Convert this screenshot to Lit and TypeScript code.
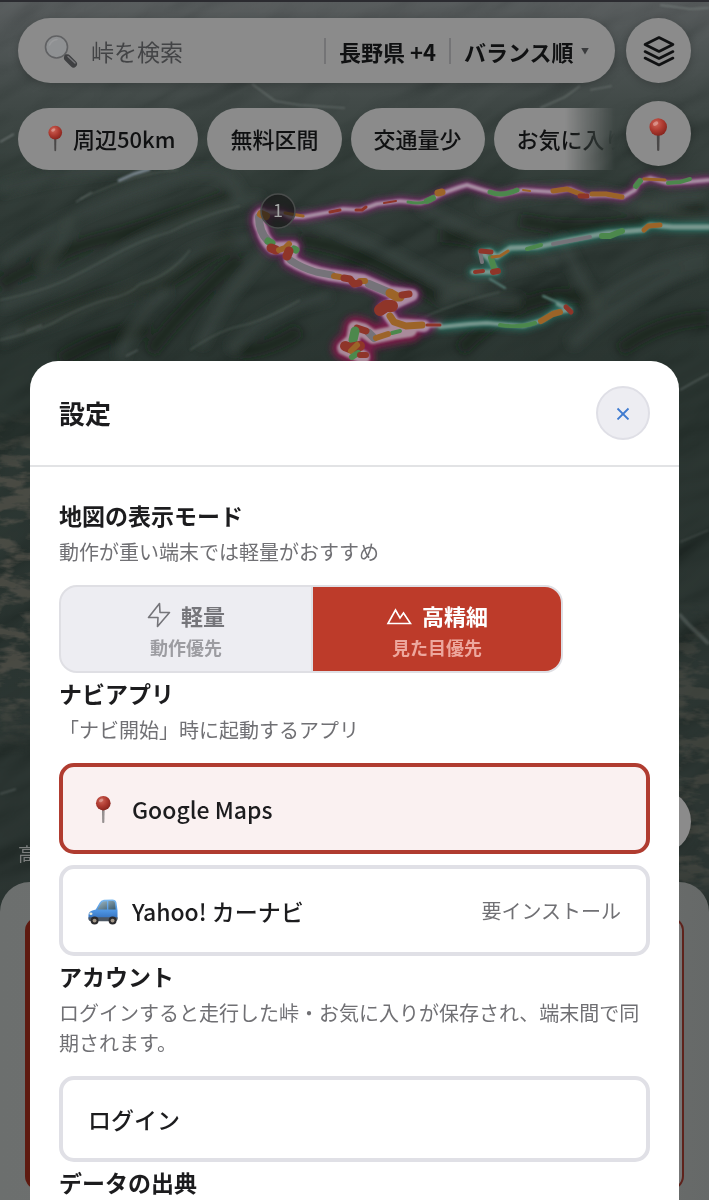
import { LitElement, html, css, svg } from "lit";
import { customElement, state } from "lit/decorators.js";

type Stroke = { d: string; c: string; w?: number };

const RED = "#8f3529";
const ORANGE = "#9c6428";
const GREEN = "#4c884c";
const GREY = "#757379";

const ROUTE_PINK =
  "M709 180 L687 182 L667 183 L650 178 L638 183 L635 190 L623 197 L603 195 L587 196 L570 189 L553 192 L523 190 L500 195 L483 190 L467 185 L460 187 L443 193 L430 200 L420 203 L400 201 L377 204 L360 210 L343 209 L330 212 L303 217 L290 217 L283 213 L264 212 Q256 216 262 230 Q264 240 273 248 L293 247 L287 253 L290 260 L307 270 L330 275 L347 278 L355 285 L363 280 L390 292 L410 295 L397 297 L383 308 L390 320 L403 326 L423 326 L440 325";
const ROUTE_PINK_NEAR =
  "M262 214 Q256 218 262 230 Q264 240 273 248 L293 247 L290 260 Q308 271 330 275 L363 280 L390 292 L412 295 L384 308 L395 324 L424 326";
const ROUTE_PINK_LOOP = "M410 330 L397 332 L373 337 L363 330 L355 328 L353 340 L344 348 L363 357";
const ROUTE_TEAL =
  "M440 327 L470 324 L487 323 L523 326 L543 320 L553 313 L570 310 L558 304";
const ROUTE_TEAL_UPPER =
  "M473 272 L497 272 L490 260 L481 252 L490 251 L497 257 L510 248 L537 247 L570 240 L607 233 L643 230 L650 225 L673 227 L709 227";

const SURFACE: Stroke[] = [
  { d: "M259 217 Q259 232 268 241", c: GREY, w: 8 },
  { d: "M261 214 L266 216", c: ORANGE, w: 8 },
  { d: "M268 241 L272 243", c: GREEN, w: 7 },
  { d: "M271 248 L276 250", c: RED, w: 9 },
  { d: "M279 250 L285 248 L289 244", c: ORANGE, w: 6 },
  { d: "M294 249 L296 250", c: GREEN, w: 7 },
  { d: "M290 260 Q302 268 316 272 L332 275", c: GREY, w: 7 },
  { d: "M289 251 L287 256", c: RED, w: 9 },
  { d: "M334 276 L340 277", c: ORANGE, w: 6 },
  { d: "M369 284 L388 292", c: GREY, w: 8 },
  { d: "M360 281 L365 281", c: ORANGE, w: 6 },
  { d: "M344 278 L350 279 L354 284 L359 283", c: RED, w: 7 },
  { d: "M390 293 L397 297 L400 297", c: ORANGE, w: 9 },
  { d: "M402 295 L409 294", c: RED, w: 7 },
  { d: "M380 310 L386 306 L392 306", c: RED, w: 12 },
  { d: "M390 316 L394 322 L406 326 L422 325", c: ORANGE, w: 7 },
  { d: "M427 325 L440 325", c: RED, w: 3 },
  { d: "M400 331 L392 333", c: GREEN, w: 4 },
  { d: "M374 338 L369 333", c: GREY, w: 8 },
  { d: "M388 334 L376 338", c: ORANGE, w: 6 },
  { d: "M366 331 L357 328", c: RED, w: 7 },
  { d: "M355 331 L353 340", c: GREEN, w: 9 },
  { d: "M345 346 L350 348 L360 346", c: RED, w: 10 },
  { d: "M351 351 L357 345", c: ORANGE, w: 6 },
  { d: "M352 357 L358 353", c: GREEN, w: 6 },
  { d: "M360 355 L366 355", c: RED, w: 6 },
  { d: "M285 213 L303 216", c: ORANGE, w: 3 },
  { d: "M330 212 L340 210", c: RED, w: 3 },
  { d: "M356 210 L362 210 L366 207", c: RED, w: 3 },
  { d: "M384 203 L396 201", c: RED, w: 2 },
  { d: "M408 202 Q418 204 425 202", c: GREEN, w: 3 },
  { d: "M427 201 L433 198", c: GREEN, w: 6 },
  { d: "M438 193 L442 192", c: ORANGE, w: 7 },
  { d: "M490 192 Q502 197 517 190", c: GREEN, w: 5 },
  { d: "M523 190 L530 191", c: ORANGE, w: 2 },
  { d: "M553 191 L567 189 L583 195", c: ORANGE, w: 5 },
  { d: "M592 194 L606 194 L622 197", c: ORANGE, w: 5 },
  { d: "M580 196 L587 196", c: RED, w: 5 },
  { d: "M636 186 L640 181", c: GREEN, w: 6 },
  { d: "M644 179 L665 180", c: ORANGE, w: 3 },
  { d: "M668 183 L680 182 L690 179", c: GREEN, w: 4 },
  { d: "M475 272 L483 271", c: RED, w: 4 },
  { d: "M491 258 L494 268", c: GREEN, w: 6 },
  { d: "M493 272 L498 271", c: RED, w: 6 },
  { d: "M482 262 L480 252 L485 251", c: GREY, w: 4 },
  { d: "M481 251 L491 252", c: RED, w: 5 },
  { d: "M492 257 L500 256 L508 251", c: ORANGE, w: 3 },
  { d: "M527 249 L541 245", c: GREEN, w: 4 },
  { d: "M553 244 L590 237", c: GREY, w: 4 },
  { d: "M602 236 L610 236 L622 231", c: GREEN, w: 6 },
  { d: "M644 230 L648 226 L660 225", c: ORANGE, w: 5 },
  { d: "M500 325 Q520 328 535 323", c: GREEN, w: 4 },
  { d: "M541 321 L553 314 L560 312", c: ORANGE, w: 6 },
  { d: "M566 307 L571 312", c: RED, w: 5 },
];

const RIDGES = [
  "M0 262 Q40 232 76 216 T170 180 T240 196",
  "M0 306 Q70 282 110 258 T200 216 T262 200",
  "M0 340 Q60 318 110 299 T180 262 T250 238",
  "M120 360 Q130 322 168 290",
  "M200 346 Q222 300 250 270 T262 250",
  "M40 270 Q66 236 72 218",
  "M230 350 Q270 306 330 296",
  "M300 216 Q360 236 420 270 T520 300",
  "M420 204 Q470 236 560 262",
  "M440 300 Q500 266 540 262",
  "M570 345 Q640 280 709 266",
  "M590 310 Q640 262 709 256",
  "M0 190 Q60 170 150 166",
  "M480 206 Q560 178 640 204 T709 214",
  "M560 236 Q580 282 600 308",
  "M640 210 Q680 190 709 200",
];

const CRESTS = [
  "M0 300 Q40 292 66 280 Q90 268 108 258 Q140 240 170 232 Q200 216 240 206",
  "M0 340 Q44 330 62 318 Q84 306 108 299 Q128 296 140 284 Q170 276 190 250",
  "M80 199 Q110 186 124 181 Q150 172 178 170",
  "M190 350 Q220 330 240 326 Q262 322 300 300",
  "M400 330 Q440 306 500 292",
];

const VALLEYS = [
  "M0 285 Q60 250 100 240 T230 196",
  "M20 330 Q80 300 130 292 T232 236",
  "M60 360 Q110 330 150 330",
  "M150 352 Q190 300 240 258",
  "M300 240 Q370 250 440 300",
  "M300 330 Q270 350 240 352",
  "M460 350 Q530 280 600 300",
  "M520 220 Q600 240 709 206",
  "M440 235 Q500 240 540 262",
  "M620 350 Q660 320 709 318",
];

const pin = (needle = "url(#needle)") => svg`
  <path d="M15 14 H17.6 L17.3 30.4 Q16.3 31.6 15.3 30.4 Z" fill=${needle} />
  <circle cx="16.3" cy="9.8" r="7.8" fill="url(#pinhead)" />
  <ellipse cx="14" cy="6.8" rx="2.6" ry="1.7" fill="#fff" opacity=".3" transform="rotate(-30 14 6.8)" />
`;

@customElement("app-root")
export class AppRoot extends LitElement {
  @state() private mode = "high";
  @state() private nav = "google";

  static styles = css`
    :host {
      display: block;
      font-family: "Noto Sans CJK JP", "Noto Sans", sans-serif;
      color: #1c1c1e;
    }
    * {
      box-sizing: border-box;
    }
    button,
    input,
    select {
      font: inherit;
      color: inherit;
      border: 0;
      margin: 0;
      padding: 0;
      background: none;
      cursor: pointer;
    }
    h1,
    h2,
    p {
      margin: 0;
    }
    svg {
      display: block;
      flex: none;
    }
    .screen {
      display: grid;
      grid-template: 100vh / minmax(0, 1fr);
      overflow: hidden;
      background: #222b28;
    }
    .map,
    .controls,
    .dialog {
      grid-area: 1 / 1;
      min-width: 0;
    }
    .map {
      width: 100%;
      height: 100%;
    }

    .controls {
      display: flex;
      flex-direction: column;
      color: #101112;
    }
    .top {
      display: grid;
      grid-template-columns: minmax(0, 1fr) auto;
      gap: 11px;
      padding: 18px;
    }
    .finder {
      display: flex;
      flex-direction: column;
      gap: 25px;
      min-width: 0;
    }
    .search {
      display: flex;
      align-items: center;
      height: 65px;
      padding: 0 26px;
      border-radius: 33px;
      background: #8b8b8b;
      box-shadow: 0 2px 8px rgba(0, 0, 0, 0.2);
      font-size: 22px;
      font-weight: 700;
    }
    .search input {
      flex: 1;
      min-width: 0;
      margin-left: 13px;
      font-size: 23px;
      font-weight: 400;
      outline: 0;
    }
    .search input::placeholder {
      color: #434446;
      opacity: 1;
    }
    .search .item {
      border-left: 2px solid #747476;
      height: 26px;
      line-height: 26px;
      display: flex;
      align-items: center;
      padding: 0 13px;
      white-space: nowrap;
    }
    .search .item:last-child {
      padding-right: 0;
    }
    .search select {
      appearance: none;
      line-height: 26px;
    }
    .caret {
      margin-left: 6px;
      font-size: 8px;
      color: #3a3b3d;
    }
    .chips {
      display: flex;
      gap: 9px;
      overflow: hidden;
      mask-image: linear-gradient(to right, #000 calc(100% - 50px), transparent);
    }
    .chip {
      flex: none;
      display: flex;
      align-items: center;
      gap: 4px;
      height: 62px;
      padding: 0 23px 2px;
      border-radius: 31px;
      background: #8b8b8b;
      font-size: 22px;
      font-weight: 500;
      white-space: nowrap;
    }
    .rounds {
      display: flex;
      flex-direction: column;
      gap: 18px;
    }
    .round {
      display: grid;
      place-items: center;
      width: 65px;
      height: 65px;
      border-radius: 50%;
      background: #8b8b8b;
      box-shadow: 0 2px 8px rgba(0, 0, 0, 0.2);
    }
    .low {
      display: flex;
      justify-content: space-between;
      align-items: flex-end;
      margin-top: auto;
      padding: 0 18px 20px;
    }
    .low .round {
      margin-bottom: 8px;
    }
    .credit {
      font-size: 18px;
      line-height: 18px;
      color: #7c7f7e;
    }
    .sheet {
      height: 318px;
      padding: 35px 25px 10px;
      border-radius: 30px 30px 0 0;
      background: linear-gradient(to right, #6c6f6e, #717372 70%, #666968);
    }
    .sheet .card {
      height: 100%;
      border: 2px solid #5e221b;
      border-left: 7px solid #5e1a10;
      border-radius: 14px;
      background: #777;
    }

    .dialog {
      margin: calc(30vh + 1px) 30px 0;
      border-radius: 28px 28px 0 0;
      background: #fff;
      overflow: hidden;
    }
    .head {
      display: flex;
      align-items: center;
      justify-content: space-between;
      padding: 25px 29px;
      border-bottom: 2px solid #e2e3e5;
    }
    .head h1 {
      font-size: 26px;
      line-height: 40px;
      font-weight: 700;
    }
    .close {
      display: grid;
      place-items: center;
      width: 54px;
      height: 54px;
      border: 2px solid #dfdfe6;
      border-radius: 50%;
      background: #ededf2;
    }
    .body {
      display: flex;
      flex-direction: column;
      gap: 4px;
      padding: 32px 29px;
    }
    section {
      display: flex;
      flex-direction: column;
      gap: 6px;
    }
    h2 {
      font-size: 23px;
      line-height: 32px;
      font-weight: 700;
    }
    p {
      font-size: 20px;
      line-height: 30px;
      color: #707074;
    }
    .modes {
      display: grid;
      grid-template-columns: 1fr 1fr;
      width: 100%;
      max-width: 504px;
      height: 88px;
      margin-top: 12px;
      border: 2px solid #dfdfe4;
      border-radius: 18px;
      background: #ededf2;
      overflow: hidden;
    }
    .mode {
      display: flex;
      flex-direction: column;
      align-items: center;
      justify-content: center;
      padding-top: 4px;
      color: #75757a;
    }
    .mode + .mode {
      border-left: 2px solid #dfdfe4;
    }
    .mode .title {
      display: flex;
      align-items: center;
      gap: 10px;
      font-size: 22px;
      line-height: 32px;
      font-weight: 700;
    }
    .mode .note {
      font-size: 18px;
      line-height: 32px;
      font-weight: 700;
      color: #9c9ca1;
    }
    .mode.on {
      background: #bd3b2a;
      color: #fff;
    }
    .mode.on .note {
      color: #eda79d;
    }
    .choices {
      display: flex;
      flex-direction: column;
      gap: 11px;
      margin-top: 12px;
    }
    .choice {
      display: flex;
      align-items: center;
      gap: 14px;
      width: 100%;
      height: 91px;
      padding: 0 25px;
      border: 4px solid #e0e0e6;
      border-radius: 15px;
      font-size: 23px;
      font-weight: 500;
      text-align: left;
    }
    .choice.on {
      border-color: #b03c30;
      background: #faf1f1;
    }
    .choice .extra {
      margin-left: auto;
      font-size: 20px;
      font-weight: 400;
      color: #707074;
    }
    .login {
      height: 86px;
      margin-top: 12px;
    }
  `;

  private terrain() {
    return svg`
      <defs>
        <linearGradient id="haze" x1="0" y1="0" x2="0" y2="1">
          <stop offset="0" stop-color="#505455" />
          <stop offset=".035" stop-color="#474d4d" />
          <stop offset=".085" stop-color="#38403e" />
          <stop offset=".15" stop-color="#29332f" />
          <stop offset=".3" stop-color="#222c28" />
          <stop offset="1" stop-color="#242c2a" />
        </linearGradient>
        <radialGradient id="pinhead" cx=".38" cy=".32" r=".7">
          <stop offset="0" stop-color="#cf6558" />
          <stop offset=".55" stop-color="#ae3a30" />
          <stop offset="1" stop-color="#86241d" />
        </radialGradient>
        <linearGradient id="needle">
          <stop offset="0" stop-color="#6c6868" />
          <stop offset=".5" stop-color="#a09b9b" />
          <stop offset="1" stop-color="#6c6868" />
        </linearGradient>
        <linearGradient id="fadeDown" x1="0" y1="0" x2="0" y2="1">
          <stop offset="0" stop-color="#fff" stop-opacity="0" />
          <stop offset=".2" stop-color="#fff" />
          <stop offset=".8" stop-color="#fff" />
          <stop offset="1" stop-color="#fff" stop-opacity="0" />
        </linearGradient>
        <mask id="townLeft"><rect x="0" y="405" width="60" height="350" fill="url(#fadeDown)" /></mask>
        <mask id="townRight"><rect x="650" y="600" width="60" height="330" fill="url(#fadeDown)" /></mask>
        <filter id="soft" x="-10%" y="-10%" width="120%" height="120%"><feGaussianBlur stdDeviation="4" /></filter>
        <filter id="fine" x="-10%" y="-10%" width="120%" height="120%"><feGaussianBlur stdDeviation="1" /></filter>
        <filter id="glow" x="-10%" y="-30%" width="120%" height="160%"><feGaussianBlur stdDeviation="3" /></filter>
        <filter id="forest" x="0" y="0" width="100%" height="100%">
          <feTurbulence type="fractalNoise" baseFrequency=".006 .016" numOctaves="3" seed="8" />
          <feDiffuseLighting surfaceScale="22" lighting-color="#fff"><feDistantLight azimuth="250" elevation="50" /></feDiffuseLighting>
        </filter>
        <filter id="town" x="0" y="0" width="100%" height="100%" color-interpolation-filters="sRGB">
          <feTurbulence type="fractalNoise" baseFrequency=".03 .08" numOctaves="4" seed="3" />
          <feColorMatrix values="0 0 0 0 .34  0 0 0 0 .33  0 0 0 0 .3  5 0 0 0 -2.2" />
        </filter>
      </defs>
      <rect width="709" height="1200" fill="url(#haze)" />
      <rect x="-500" y="-300" width="1700" height="1700" filter="url(#forest)" opacity=".16" transform="rotate(-28 354 300)" style="mix-blend-mode:soft-light" />
      <g fill="none" filter="url(#soft)">
        ${VALLEYS.map((d) => svg`<path d=${d} stroke="#121b17" stroke-width="14" opacity=".6" />`)}
        ${RIDGES.map((d) => svg`<path d=${d} stroke="#3d4a42" stroke-width="12" opacity=".6" />`)}
      </g>
      <g fill="none" filter="url(#fine)">
        ${CRESTS.map((d) => svg`<path d=${d} stroke="#56635b" stroke-width="1.6" opacity=".55" />`)}
      </g>
      <g fill="none" stroke="#7f8785" stroke-width="1.6" opacity=".7" filter="url(#fine)">
        <path d="M118 181 L134 174 L150 169" stroke="#9aa7b5" stroke-width="3" />
        <path d="M252 84 L275 101 L300 105 L345 108" opacity=".7" />
        <path d="M540 108 L565 97 L580 86 M590 90 L612 86" opacity=".7" />
        <path d="M660 5 L690 9 L709 8" />
        <path d="M0 142 L14 134" /><path d="M76 202 L92 192" opacity=".6" />
        <path d="M680 390 L694 382 L709 374" opacity=".6" />
        <path d="M680 542 L709 530" opacity=".4" />
        <path d="M679 614 L690 626 L709 644" stroke-width="4" opacity=".5" />
        <path d="M0 794 L16 789" opacity=".6" />
        <path d="M26 331 L42 325 M126 356 L138 350" opacity=".6" />
      </g>
      <g mask="url(#townLeft)"><rect x="0" y="400" width="60" height="360" filter="url(#town)" opacity=".7" /></g>
      <g mask="url(#townRight)"><rect x="650" y="590" width="59" height="350" filter="url(#town)" opacity=".45" /></g>
      <rect width="709" height="2" fill="#2b2b30" />

      <g fill="none" stroke-linejoin="round" stroke-linecap="round">
        <g filter="url(#glow)">
          <path d=${ROUTE_PINK_NEAR} stroke="#742060" stroke-width="18" opacity=".85" />
          <path d=${ROUTE_PINK} stroke="#7d2c6c" stroke-width="8" />
          <path d=${ROUTE_PINK_LOOP} stroke="#7c1c4a" stroke-width="24" />
          <path d=${ROUTE_TEAL} stroke="#2a6c5f" stroke-width="9" />
          <path d=${ROUTE_TEAL_UPPER} stroke="#2a6c5f" stroke-width="10" />
        </g>
        <g filter="url(#fine)">
          <path d=${ROUTE_PINK_NEAR} stroke="#a98aa2" stroke-width="12" />
          <path d=${ROUTE_PINK} stroke="#a890a4" stroke-width="4" />
          <path d=${ROUTE_PINK_LOOP} stroke="#a98a9a" stroke-width="14" />
          <path d=${ROUTE_TEAL} stroke="#78978f" stroke-width="4" />
          <path d=${ROUTE_TEAL_UPPER} stroke="#78978f" stroke-width="5" />
          <path d="M543 296 L566 306 M490 279 L505 288" stroke="#5f8880" stroke-width="2" />
        </g>
        ${SURFACE.map((s) => svg`<path d=${s.d} stroke=${s.c} stroke-width=${s.w ?? 5} />`)}
      </g>
      <circle cx="278" cy="211" r="17" fill="#171717" fill-opacity=".65" stroke="#4a4d4c" stroke-width="1.5" />
      <text x="278" y="217" text-anchor="middle" font-size="18" fill="#a3a5a4">1</text>
    `;
  }

  private car() {
    return svg`
      <defs>
        <linearGradient id="paint" x1="0" y1="0" x2="0" y2="1">
          <stop offset="0" stop-color="#7db9ee" /><stop offset=".55" stop-color="#4d94e2" /><stop offset="1" stop-color="#2f68b4" />
        </linearGradient>
        <linearGradient id="glass" x1="0" y1="0" x2="1" y2="1">
          <stop offset="0" stop-color="#9fb9c6" /><stop offset="1" stop-color="#3c5a6b" />
        </linearGradient>
      </defs>
      <path d="M1.5 20 Q1.5 16 5.5 15 L9 14 L13 7 Q14.3 4.4 17.5 4 L26 3.6 Q29.8 3.8 30.4 6.6 L31.5 15 V23 Q31.5 25.4 29 25.4 H4 Q1.5 25.4 1.5 23 Z" fill="url(#paint)" />
      <path d="M10.6 14 L14.6 7.4 Q15.4 5.8 17.4 5.6 L20.6 5.3 V14 Z M22 5.2 H26.6 Q28.6 5.3 28.8 7 L29.6 14 H22 Z" fill="url(#glass)" />
      <path d="M1.5 22 H31.5 V23.6 Q31.5 26 28.8 26 H4.2 Q1.5 26 1.5 23.6 Z" fill="#4d5864" />
      <ellipse cx="4" cy="18.4" rx="1.6" ry="1.3" fill="#f0efd9" />
      <circle cx="7.8" cy="25.4" r="4.1" fill="#2b2a2c" /><circle cx="7.8" cy="25.4" r="2" fill="#a3988a" />
      <circle cx="26.4" cy="25.4" r="4.1" fill="#2b2a2c" /><circle cx="26.4" cy="25.4" r="2" fill="#a3988a" />
    `;
  }

  render() {
    return html`
      <div class="screen">
        <svg class="map" viewBox="0 0 709 1200" preserveAspectRatio="xMidYMin slice" aria-hidden="true">
          ${this.terrain()}
        </svg>

        <div class="controls">
          <div class="top">
            <div class="finder">
              <div class="search">
                <svg width="34" height="34" viewBox="0 0 34 34" aria-hidden="true">
                  <path d="M20.5 20.5 L24 24" stroke="#4c4c4e" stroke-width="3" />
                  <path d="M23.5 24 L29.5 30" stroke="#3f4042" stroke-width="7" stroke-linecap="round" />
                  <path d="M24 22.4 L31 29" stroke="#77777a" stroke-width="1.4" stroke-linecap="round" />
                  <circle cx="12.5" cy="13" r="11" fill="#8f9193" stroke="#606163" stroke-width="1.6" />
                  <path d="M5.5 11 Q8 6 13 5.5" fill="none" stroke="#9a9b9d" stroke-width="1.6" stroke-linecap="round" />
                </svg>
                <input type="text" aria-label="峠を検索" placeholder="峠を検索" />
                <button class="item">長野県 +4</button>
                <span class="item">
                  <select aria-label="バランス順">
                    <option>バランス順</option>
                  </select>
                  <span class="caret">▼</span>
                </span>
              </div>
              <div class="chips">
                <button class="chip">
                  <svg width="28" height="28" viewBox="0 0 32 32" aria-hidden="true">${pin("#4a4848")}</svg>
                  周辺50km
                </button>
                <button class="chip">無料区間</button>
                <button class="chip">交通量少</button>
                <button class="chip">お気に入り</button>
              </div>
            </div>
            <div class="rounds">
              <button class="round" aria-label="レイヤー">
                <svg width="34" height="34" viewBox="0 0 34 34" fill="none" stroke="#101112" stroke-width="2.6" stroke-linejoin="round" stroke-linecap="round" aria-hidden="true">
                  <path d="M17 3.5 L31 10.5 L17 17.5 L3 10.5 Z" />
                  <path d="M3 17.5 L17 24.5 L31 17.5" />
                  <path d="M3 24 L17 31 L31 24" />
                </svg>
              </button>
              <button class="round" aria-label="現在地">
                <svg width="36" height="36" viewBox="1 0 32 32" aria-hidden="true">${pin("#4a4848")}</svg>
              </button>
            </div>
          </div>
          <div class="low">
            <span class="credit">高</span>
            <button class="round" aria-label="設定"></button>
          </div>
          <div class="sheet"><div class="card"></div></div>
        </div>

        <div class="dialog" role="dialog" aria-labelledby="title">
          <div class="head">
            <h1 id="title">設定</h1>
            <button class="close" aria-label="閉じる">
              <svg width="14" height="14" viewBox="0 0 14 14" stroke="#3f7bd0" stroke-width="1.8" aria-hidden="true">
                <path d="M1.5 2.5 L12.5 13.5 M12.5 2.5 L1.5 13.5" />
              </svg>
            </button>
          </div>
          <div class="body">
            <section>
              <h2>地図の表示モード</h2>
              <p>動作が重い端末では軽量がおすすめ</p>
              <div class="modes">
                <button
                  class="mode ${this.mode === "light" ? "on" : ""}"
                  aria-pressed=${this.mode === "light"}
                  @click=${() => (this.mode = "light")}
                >
                  <span class="title">
                    <svg width="24" height="26" viewBox="0 0 24 26" fill="none" stroke="currentColor" stroke-width="1.6" stroke-linejoin="round" aria-hidden="true">
                      <path d="M12.5 1.5 L1.5 15.5 H11 L10.5 24.5 L22.5 10.5 H13 Z" />
                    </svg>
                    軽量
                  </span>
                  <span class="note">動作優先</span>
                </button>
                <button
                  class="mode ${this.mode === "high" ? "on" : ""}"
                  aria-pressed=${this.mode === "high"}
                  @click=${() => (this.mode = "high")}
                >
                  <span class="title">
                    <svg width="26" height="26" viewBox="0 0 26 26" fill="none" stroke="currentColor" stroke-width="1.6" stroke-linejoin="miter" aria-hidden="true">
                      <path d="M2 21.5 L9.5 8 L14 16 L17.5 11 L24.5 21.5 Z" />
                    </svg>
                    高精細
                  </span>
                  <span class="note">見た目優先</span>
                </button>
              </div>
            </section>
            <section>
              <h2>ナビアプリ</h2>
              <p>「ナビ開始」時に起動するアプリ</p>
              <div class="choices">
                <button
                  class="choice ${this.nav === "google" ? "on" : ""}"
                  aria-pressed=${this.nav === "google"}
                  @click=${() => (this.nav = "google")}
                >
                  <svg width="30" height="30" viewBox="0 0 32 32" aria-hidden="true">${pin()}</svg>
                  Google Maps
                </button>
                <button
                  class="choice ${this.nav === "yahoo" ? "on" : ""}"
                  aria-pressed=${this.nav === "yahoo"}
                  @click=${() => (this.nav = "yahoo")}
                >
                  <svg width="30" height="30" viewBox="1 0 31 31" aria-hidden="true">${this.car()}</svg>
                  Yahoo! カーナビ
                  <span class="extra">要インストール</span>
                </button>
              </div>
            </section>
            <section>
              <h2>アカウント</h2>
              <p>ログインすると走行した峠・お気に入りが保存され、端末間で同期されます。</p>
              <button class="choice login">ログイン</button>
            </section>
            <section>
              <h2>データの出典</h2>
            </section>
          </div>
        </div>
      </div>
    `;
  }
}
